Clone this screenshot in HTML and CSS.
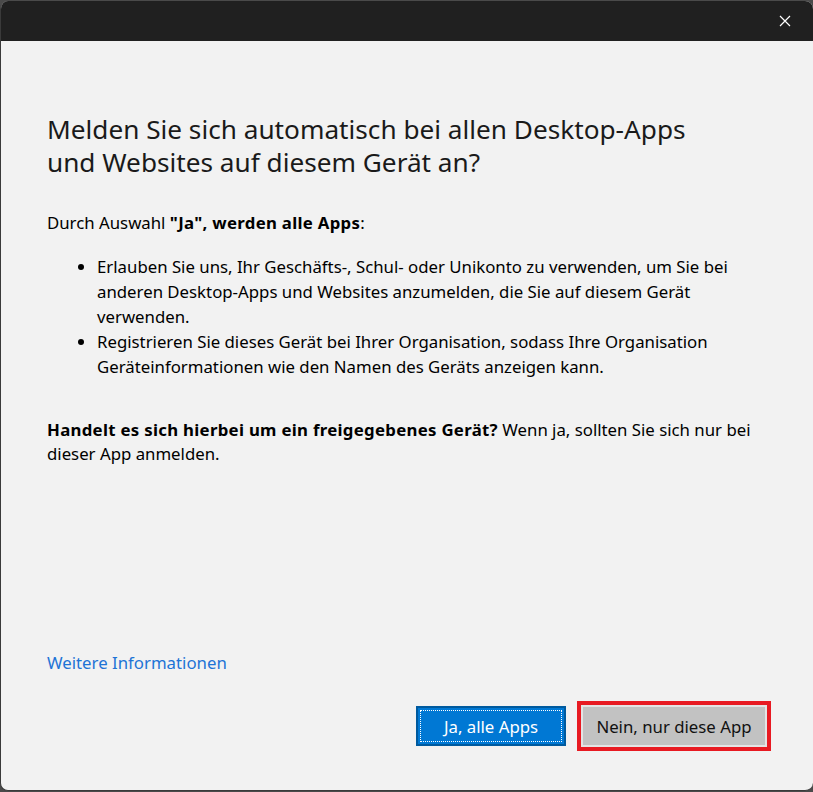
FILE: index.html
```html
<!DOCTYPE html>
<html lang="de">
<head>
<meta charset="utf-8">
<title>Anmelden</title>
<link rel="stylesheet" href="styles.css">
</head>
<body>
<div class="window">
  <div class="titlebar">
    <button class="close" aria-label="Schließen">
      <svg width="12" height="12" viewBox="0 0 12 12"><path d="M1 1L11 11M11 1L1 11" stroke="#fff" stroke-width="1.2" fill="none"/></svg>
    </button>
  </div>
  <div class="content">
    <h1 class="heading">Melden Sie sich automatisch bei allen Desktop-Apps und Websites auf diesem Gerät an?</h1>
    <p class="intro">Durch Auswahl <b>"Ja", werden alle Apps</b>:</p>
    <ul class="points">
      <li>Erlauben Sie uns, Ihr Geschäfts-, Schul- oder Unikonto zu verwenden, um Sie bei anderen Desktop-Apps und Websites anzumelden, die Sie auf diesem Gerät verwenden.</li>
      <li>Registrieren Sie dieses Gerät bei Ihrer Organisation, sodass Ihre Organisation Geräteinformationen wie den Namen des Geräts anzeigen kann.</li>
    </ul>
    <p class="shared"><b>Handelt es sich hierbei um ein freigegebenes Gerät?</b> Wenn ja, sollten Sie sich nur bei dieser App anmelden.</p>
    <div class="spacer"></div>
    <a class="more" href="#">Weitere Informationen</a>
    <div class="actions">
      <button class="btn primary">Ja, alle Apps</button>
      <button class="btn secondary">Nein, nur diese App</button>
    </div>
  </div>
</div>
</body>
</html>
```

FILE: styles.css
```css
html, body {
  margin: 0;
  padding: 0;
  background: #4a4a4a;
}
body {
  width: 813px;
  height: 792px;
  overflow: hidden;
  font-family: "Segoe UI", "Noto Sans", "Open Sans", sans-serif;
}
.window {
  margin-top: 1px;
  height: 790px;
  border-radius: 8px;
  background: #f2f2f2;
  border-left: 1px solid #3a3a3a;
  border-bottom: 1px solid #3a3a3a;
  overflow: hidden;
  display: flex;
  flex-direction: column;
  box-sizing: border-box;
}
.titlebar {
  height: 40px;
  flex: none;
  background: #202020;
  display: flex;
  justify-content: flex-end;
  align-items: center;
}
.close {
  width: 46px;
  height: 40px;
  border: 0;
  background: transparent;
  padding: 0;
  margin-right: 5px;
  display: flex;
  align-items: center;
  justify-content: center;
}
.content {
  flex: 1;
  display: flex;
  flex-direction: column;
  padding: 72px 30px 43px 46px;
  color: #000;
}
.heading {
  margin: 0;
  max-width: 680px;
  font-weight: 400;
  font-size: 26.2px;
  line-height: 33px;
  color: #1a1a1a;
}
.intro, .shared, .points {
  font-size: 16.8px;
  line-height: 25px;
}
.intro b, .shared b {
  letter-spacing: 0.3px;
}
.intro {
  margin: 31px 0 0;
}
.points {
  margin: 19px 0 0;
  padding-left: 50px;
  max-width: 670px;
}
.shared {
  margin: 39px 0 0;
  line-height: 24px;
}
.spacer {
  flex: 1;
}
.more {
  font-size: 16.8px;
  line-height: 24px;
  color: #1e74d6;
  text-decoration: none;
  align-self: flex-start;
}
.actions {
  margin-top: 30px;
  padding-right: 16px;
  display: flex;
  justify-content: flex-end;
  align-items: center;
  gap: 15px;
}
.btn {
  height: 40px;
  font-family: inherit;
  font-size: 16.8px;
  padding: 0;
  position: relative;
}
.primary {
  width: 150px;
  background: #0078d4;
  color: #fff;
  border: 2px solid #005a9e;
}
.primary::after {
  content: "";
  position: absolute;
  inset: 2px;
  border: 1px dotted #fff;
}
.secondary {
  width: 186px;
  height: 42px;
  background: #c2c2c2;
  color: #111;
  border: 2px solid #e4e4e4;
  outline: 4px solid #e81a22;
  outline-offset: 0;
}
```
